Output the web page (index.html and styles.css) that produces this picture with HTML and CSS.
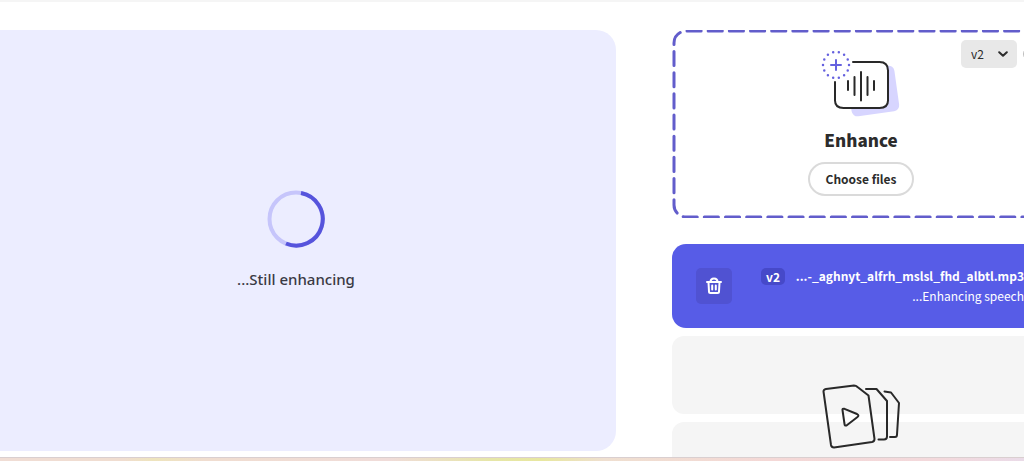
FILE: index.html
```
<!DOCTYPE html>
<html lang="en">
<head>
    <meta charset="UTF-8">
    <meta name="viewport" content="width=device-width, initial-scale=1.0">
    <title>Enhance Speech</title>
    <link rel="stylesheet" href="styles.css">
</head>
<body>
    <div class="page">
        <main class="workspace">
            <section class="stage" role="status">
                <svg class="spinner" viewBox="0 0 58 58" aria-hidden="true">
                    <circle class="spinner-track" cx="29" cy="29" r="26.500"/>
                    <path class="spinner-arc" d="M34 3A26.500 26.500 0 1 1 19 53.500"/>
                </svg>
                <p class="stage-text">...Still enhancing</p>
            </section>

            <aside class="sidebar">
                <section class="dropzone">
                    <svg class="dropzone-border" aria-hidden="true">
                        <rect x="2" y="1" rx="12" pathLength="1092"/>
                    </svg>
                    <div class="toolbar">
                        <label class="version">
                            <select aria-label="Version">
                                <option>v2</option>
                                <option>v1</option>
                            </select>
                            <svg viewBox="0 0 10 6" aria-hidden="true"><path d="M1.2 1.2L5 4.8L8.800 1.2"/></svg>
                        </label>
                        <button class="help" type="button" aria-label="Help"></button>
                    </div>
                    <svg class="enhance-icon" viewBox="0 0 80 70" aria-hidden="true">
                        <rect class="shade" x="28" y="18" width="48" height="46" rx="6" transform="rotate(-8 52 41)"/>
                        <path class="frame" d="M32 12H58.500Q67 12 67 20.500V50.500Q67 58 58.500 58H22.500Q14 58 14 50.500V31L32 12Z"/>
                        <circle class="badge" cx="15" cy="15" r="16"/>
                        <path class="outline" d="M32 12H58.500Q67 12 67 20.500V50.500Q67 58 58.500 58H22.500Q14 58 14 50.500V32"/>
                        <path class="outline" d="M27 31V40M33.500 27V45M40 22V50.500M46.500 27V45M53 31V40"/>
                        <circle class="dots" cx="15" cy="15" r="13" pathLength="84"/>
                        <path class="plus" d="M15 10V20M10 15H20"/>
                    </svg>
                    <h2>Enhance</h2>
                    <button class="choose" type="button">Choose files</button>
                </section>

                <article class="file">
                    <button class="delete" type="button" aria-label="Delete">
                        <svg viewBox="0 0 18 18" aria-hidden="true">
                            <path d="M2 5H16M5.500 5C5.500 2.500 7 1.500 9 1.500S12.500 2.500 12.500 5M3.500 5.500L4 14.500Q4 16 5.500 16H12.500Q14 16 14 14.500L14.500 5.500M7.200 8.500V12.500M10.800 8.500V12.500"/>
                        </svg>
                    </button>
                    <span class="tag">v2</span>
                    <div class="file-info">
                        <p class="file-name">...-_aghnyt_alfrh_mslsl_fhd_albtl.mp3</p>
                        <p class="file-status">...Enhancing speech</p>
                    </div>
                </article>

                <div class="slots">
                    <div class="slot"></div>
                    <div class="slot slot-last"></div>
                    <svg class="files-art" viewBox="0 0 80 66" aria-hidden="true">
                        <path d="M2.500 7.500Q2.500 5.500 5 5L33 1.500Q35 1.500 36.500 3L47.500 11.500L53.500 55Q53.500 57.500 51 58L13 63.500Q10.500 63.500 10 61Z"/>
                        <path d="M21.500 26Q21 24.500 23.500 24.800L36 30Q38.500 31.500 36.500 33L25.500 41.500Q23.500 42 23.500 40Z"/>
                        <path d="M45 5H55.500L66 17V52.500Q66 55.500 63 55.500H57.500M63.500 7.500L70 8.500L78 19L76 50.500Q76 53 74 53H69"/>
                    </svg>
                </div>
            </aside>
        </main>
        <footer class="strip"></footer>
    </div>
</body>
</html>
```
FILE: styles.css
```
* {
    box-sizing: border-box;
}
body {
    margin: 0;
    background: #fff;
    color: #2c2c2c;
    font-family: "Noto Sans CJK SC", "Noto Sans", sans-serif;
}
h2, p {
    margin: 0;
}
button, select {
    font-family: inherit;
    color: inherit;
    border: 0;
    cursor: pointer;
}
svg {
    fill: none;
    stroke-linecap: round;
    stroke-linejoin: round;
}
.page {
    display: flex;
    flex-direction: column;
    height: 100vh;
    border-top: 2px solid #f5f5f5;
    overflow: hidden;
}
/* the workspace bleeds past both sides of the window */
.workspace {
    flex: 1;
    min-height: 0;
    display: grid;
    grid-template-columns: 1fr 378px;
    gap: 56px;
    margin: 0 -26px 0 -24px;
    padding-top: 28px;
}

/* progress area */
.stage {
    display: flex;
    flex-direction: column;
    align-items: center;
    justify-content: center;
    gap: 19px;
    margin-bottom: 6px;
    border-radius: 20px;
    background: #ecedff;
}
.spinner {
    width: 58px;
    height: 58px;
    stroke-width: 4px;
}
.spinner-track {
    stroke: #c6c5fb;
}
.spinner-arc {
    stroke: #5654dc;
    stroke-linecap: butt;
}
.stage-text {
    font-family: "Noto Sans", sans-serif;
    font-size: 15px;
    font-weight: 500;
    line-height: 24px;
    color: #3a3a44;
}

/* upload box */
.sidebar {
    display: flex;
    flex-direction: column;
    min-width: 0;
    min-height: 0;
}
.dropzone {
    position: relative;
    display: flex;
    flex-direction: column;
    align-items: center;
    padding: 20px 0 22px;
    margin-bottom: 26px;
}
.dropzone-border {
    position: absolute;
    inset: 0;
    width: 100%;
    height: 100%;
    stroke: #625dcb;
    stroke-width: 3px;
    stroke-dasharray: 14 7;
    stroke-dashoffset: -1;
}
.dropzone-border rect {
    width: calc(100% - 3px);
    height: calc(100% - 2px);
}
.toolbar {
    position: absolute;
    top: 10px;
    right: 13px;
    display: flex;
    align-items: center;
    gap: 6px;
}
.version {
    display: grid;
    align-items: center;
}
.version select {
    grid-area: 1 / 1;
    width: 56px;
    height: 28px;
    padding: 0 10px 2px;
    border-radius: 5px;
    background: #e8e8e8;
    font-size: 12px;
    appearance: none;
}
.version svg {
    grid-area: 1 / 1;
    justify-self: end;
    width: 10px;
    height: 6px;
    margin-right: 9px;
    stroke: #2c2c2c;
    stroke-width: 2px;
    pointer-events: none;
}
.help {
    width: 14px;
    height: 14px;
    padding: 0;
    border: 1px solid #bbb;
    border-radius: 50%;
    background: #fff;
}
.enhance-icon {
    width: 80px;
    height: 70px;
    stroke-width: 2px;
}
.shade {
    fill: #d7d5ff;
}
.frame {
    fill: #fff;
}
.outline {
    stroke: #292929;
}
.badge {
    fill: #fff;
}
.dots {
    stroke: #6561df;
    stroke-width: 2.5px;
    stroke-dasharray: 0 6;
}
.plus {
    stroke: #6561df;
}
.dropzone h2 {
    margin: 4px 0 6px;
    font-size: 17px;
    font-weight: 900;
    line-height: 32px;
}
.choose {
    height: 34px;
    padding: 0 16px 2px;
    border: 2px solid #dadada;
    border-radius: 17px;
    background: #fff;
    font-size: 12px;
    font-weight: 700;
}

/* file being processed */
.file {
    display: flex;
    align-items: center;
    height: 84px;
    flex-shrink: 0;
    padding: 0 26px 0 24px;
    border-radius: 14px;
    background: #575ce7;
    color: #fff;
}
.delete {
    display: grid;
    place-items: center;
    flex-shrink: 0;
    width: 36px;
    height: 36px;
    padding: 0;
    border-radius: 5px;
    background: #5052d2;
}
.delete svg {
    width: 18px;
    height: 18px;
    stroke: #fff;
    stroke-width: 2px;
}
.tag {
    align-self: flex-start;
    margin: 24px 0 0 29px;
    padding: 0 5px;
    border-radius: 5px;
    background: #4649c9;
    font-size: 12px;
    font-weight: 700;
    line-height: 17px;
}
.file-info {
    flex: 1;
    text-align: right;
    white-space: nowrap;
}
.file-name {
    font-size: 12px;
    font-weight: 700;
    line-height: 20px;
}
.file-status {
    font-size: 12px;
    line-height: 20px;
}

/* empty places in the list */
.slots {
    position: relative;
    flex: 1;
    min-height: 0;
    display: flex;
    flex-direction: column;
    gap: 8px;
    padding-top: 8px;
}
.slot {
    height: 78px;
    border-radius: 12px;
    background: #f5f5f5;
}
.slot-last {
    flex: 1;
    height: auto;
    border-radius: 12px 12px 0 0;
}
.files-art {
    position: absolute;
    top: 56px;
    left: 50%;
    width: 80px;
    height: 66px;
    transform: translateX(-50%);
    stroke: #292929;
    stroke-width: 2px;
}

.strip {
    height: 4px;
    border-top: 1px solid #d9cfd0;
    background: linear-gradient(90deg, #f0ddd5 0%, #f0ddd0 12%, #eee4bd 15%, #f0ddd0 20%, #f0dcd9 38%, #e6e6a8 48%, #e8e7a0 53%, #efdfd0 59%, #f4d8d6 75%, #f3d9dc 92%, #eadbe8 100%);
}
```
